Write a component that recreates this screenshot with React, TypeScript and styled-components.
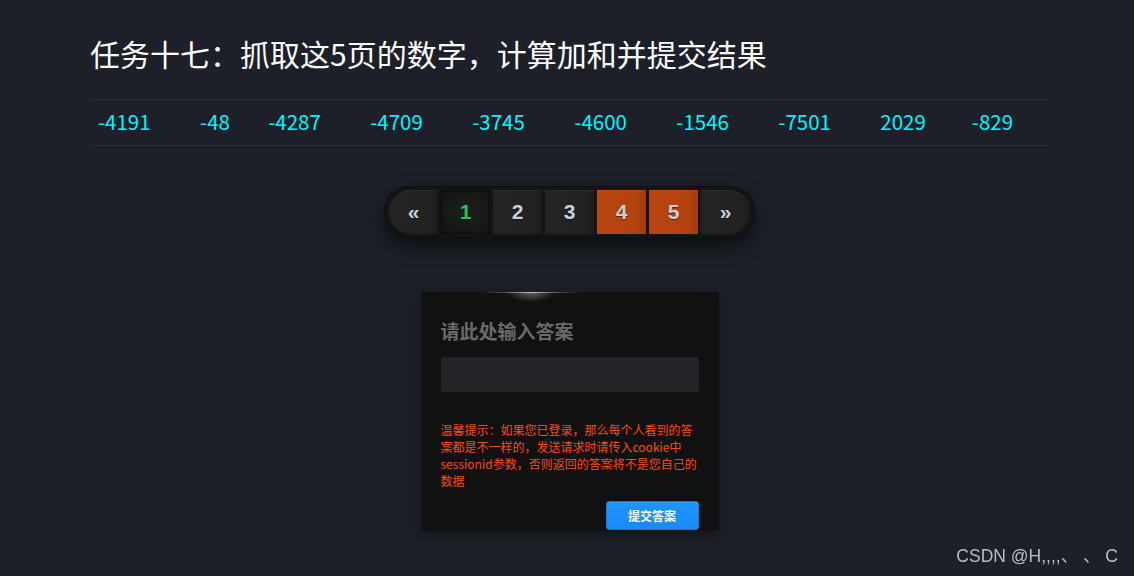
import React from "react";
import styled, { createGlobalStyle } from "styled-components";

const Global = createGlobalStyle`
  html, body { margin: 0; padding: 0; background: #1e2029; }
  body { font-family: "Noto Sans CJK SC", "Noto Sans", sans-serif; min-height: 576px; overflow: hidden; }
`;

const Page = styled.div`
  width: 959px;
  margin: 0 0 0 90px;
  padding-top: 33px;
  display: flex;
  flex-direction: column;
  align-items: stretch;
`;

const Title = styled.h1`
  margin: 0;
  font-size: 30px;
  line-height: 40px;
  font-weight: 400;
  color: #ffffff;
`;

const NumTable = styled.table`
  width: 100%;
  margin-top: 26px;
  border-collapse: collapse;
  border-top: 1px solid #2c2f38;
  border-bottom: 1px solid #2c2f38;
`;

const Cell = styled.td`
  padding: 0 8px 3px 8px;
  height: 42px;
  font-size: 20.5px;
  color: #00f6ff;
  text-align: left;
  vertical-align: middle;
`;

const PagerWrap = styled.div`
  display: flex;
  justify-content: center;
  margin-top: 40px;
`;

const Pager = styled.div`
  display: flex;
  gap: 3px;
  padding: 4px 5px;
  background: #151515;
  border-radius: 30px;
  box-shadow: 0 8px 18px rgba(0, 0, 0, 0.55), inset 0 0 2px rgba(0, 0, 0, 0.8);
`;

const PageBtn = styled.div<{ $kind: "edge-l" | "edge-r" | "active" | "normal" | "hot" }>`
  width: 49px;
  height: 44px;
  display: flex;
  align-items: center;
  justify-content: center;
  font-family: "Liberation Sans", Arial, sans-serif;
  font-weight: 700;
  font-size: 21px;
  color: ${(p) => (p.$kind === "active" ? "#27c25e" : "#c8d0da")};
  background: ${(p) =>
    p.$kind === "hot"
      ? "linear-gradient(90deg, #b94510 0%, #b3430f 80%, #a03a0c 100%)"
      : p.$kind === "active"
      ? "radial-gradient(circle at 50% 50%, #1c211d 0%, #121412 100%)"
      : "linear-gradient(90deg, #232323 0%, #222222 80%, #1d1d1d 100%)"};
  border-radius: ${(p) =>
    p.$kind === "edge-l" ? "22px 0 0 22px" : p.$kind === "edge-r" ? "0 22px 22px 0" : "0"};
  box-shadow: ${(p) =>
    p.$kind === "active"
      ? "inset 0 0 3px rgba(0,0,0,0.9)"
      : "inset 0 1px 0 rgba(255,255,255,0.06)"};
  text-shadow: 0 1px 1px rgba(0, 0, 0, 0.5);
`;

const CardWrap = styled.div`
  display: flex;
  justify-content: center;
  margin-top: 54px;
`;

const Card = styled.div`
  position: relative;
  width: 258px;
  padding: 26px 20px 0 20px;
  height: 213px;
  background: #111111;
  border-radius: 3px;
  box-shadow: 0 4px 16px rgba(0, 0, 0, 0.35);
  display: flex;
  flex-direction: column;
  &::before {
    content: "";
    position: absolute;
    top: 0;
    left: 60px;
    width: 100px;
    height: 1px;
    background: linear-gradient(90deg, rgba(255,255,255,0) 0%, rgba(255,255,255,0.6) 50%, rgba(255,255,255,0) 100%);
  }
  &::after {
    content: "";
    position: absolute;
    top: 0;
    left: 85px;
    width: 50px;
    height: 10px;
    background: radial-gradient(ellipse at 50% 0%, rgba(255,255,255,0.35) 0%, rgba(255,255,255,0) 70%);
  }
`;

const CardTitle = styled.div`
  font-size: 19px;
  font-weight: 700;
  line-height: 26px;
  color: #6a6a6a;
`;

const Input = styled.div`
  margin-top: 13px;
  height: 35px;
  border-radius: 3px;
  background: #242428;
`;

const Hint = styled.div`
  margin-top: 29px;
  font-size: 12px;
  line-height: 17px;
  color: #ff4a0a;
`;

const Actions = styled.div`
  display: flex;
  justify-content: flex-end;
  margin-top: 12px;
`;

const SubmitBtn = styled.button`
  width: 93px;
  height: 29px;
  border: 1px solid #1a78d8;
  border-radius: 3px;
  background: linear-gradient(180deg, #2196ff 0%, #1889f5 100%);
  color: #ffffff;
  font-family: "Noto Sans CJK SC", sans-serif;
  font-weight: 700;
  font-size: 12px;
  cursor: pointer;
`;

const Watermark = styled.div`
  position: fixed;
  right: 16px;
  bottom: 9px;
  font-family: "Liberation Sans", Arial, "Noto Sans CJK SC", sans-serif;
  font-size: 17.5px;
  color: #b9bcc2;
  white-space: pre;
`;

const numbers = [-4191, -48, -4287, -4709, -3745, -4600, -1546, -7501, 2029, -829];

export default function App() {
  return (
    <>
      <Global />
      <Page>
        <Title>任务十七：抓取这5页的数字，计算加和并提交结果</Title>
        <NumTable>
          <tbody>
            <tr>
              {numbers.map((n, i) => (
                <Cell key={i}>{n}</Cell>
              ))}
            </tr>
          </tbody>
        </NumTable>
        <PagerWrap>
          <Pager>
            <PageBtn $kind="edge-l">«</PageBtn>
            <PageBtn $kind="active">1</PageBtn>
            <PageBtn $kind="normal">2</PageBtn>
            <PageBtn $kind="normal">3</PageBtn>
            <PageBtn $kind="hot">4</PageBtn>
            <PageBtn $kind="hot">5</PageBtn>
            <PageBtn $kind="edge-r">»</PageBtn>
          </Pager>
        </PagerWrap>
        <CardWrap>
          <Card>
            <CardTitle>请此处输入答案</CardTitle>
            <Input />
            <Hint>
              温馨提示：如果您已登录，那么每个人看到的答案都是不一样的，发送请求时请传入cookie中sessionid参数，否则返回的答案将不是您自己的数据
            </Hint>
            <Actions>
              <SubmitBtn>提交答案</SubmitBtn>
            </Actions>
          </Card>
        </CardWrap>
      </Page>
      <Watermark>CSDN @H,,,,、 、 C</Watermark>
    </>
  );
}
